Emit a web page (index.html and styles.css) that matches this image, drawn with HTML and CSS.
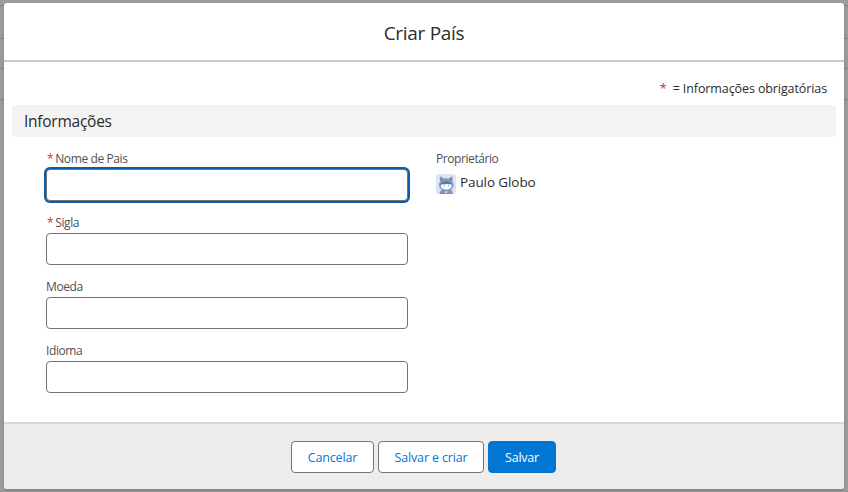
FILE: index.html
```html
<!DOCTYPE html>
<html lang="pt-BR">
<head>
<meta charset="utf-8">
<title>Criar País</title>
<link rel="stylesheet" href="styles.css">
</head>
<body>
<main class="modal">
  <header class="modal-header"><h1>Criar País</h1></header>
  <div class="modal-body">
    <p class="legend"><span class="required">*</span><span>= Informações obrigatórias</span></p>
    <h2 class="section-title"><span>Informações</span></h2>
    <div class="form-grid">
      <div class="fields">
        <div class="field"><label for="name"><abbr>*</abbr><span>Nome de Pais</span></label><input id="name" class="input focused" type="text"></div>
        <div class="field"><label for="code"><abbr>*</abbr><span>Sigla</span></label><input id="code" class="input" type="text"></div>
        <div class="field"><label for="currency"><span>Moeda</span></label><input id="currency" class="input" type="text"></div>
        <div class="field"><label for="language"><span>Idioma</span></label><input id="language" class="input" type="text"></div>
      </div>
      <div class="owner">
        <div class="owner-label">Proprietário</div>
        <div class="owner-value">
          <svg class="avatar" viewBox="0 0 20 20" aria-hidden="true">
            <rect width="20" height="20" rx="3" fill="#dfe5ee"/>
            <path d="M3.5 20q.2-3.7 3.5-4.5h6.5q3.3.8 3.5 4.5z" fill="#7f97be"/>
            <path d="M4 2.5Q5.8 2.6 7.3 4.6Q10.2 3.9 13.1 4.6Q14.7 2.6 16.5 2.5Q17 5 16.2 7.3Q17.9 9.3 17.6 11.8Q16.5 16.8 10.2 16.8Q4 16.8 3 11.8Q2.6 9.3 4.3 7.3Q3.5 5 4 2.5z" fill="#7e98c0"/>
            <path d="M4.9 4.1l1.5 1.4-1 1.1zM15.5 4.1L14 5.5l1.1 1.1z" fill="#526e9e"/>
            <ellipse cx="10.3" cy="11.9" rx="5.4" ry="3.8" fill="#fff"/>
            <path d="M4.7 11Q5.2 7.5 10.2 7.5Q15.3 7.5 15.9 11L14 9.9l-1.5.6-2.2-.8-1.8 1-1.6-.6z" fill="#5874a4"/>
            <path d="M8 11.5v1.2M12.8 11.5v1.2" fill="none" stroke="#7c8eab" stroke-width=".9"/>
            <path d="M8.7 17.5h3l-1.5 2z" fill="#e9eef7"/>
          </svg>
          <span>Paulo Globo</span>
        </div>
      </div>
    </div>
  </div>
  <footer class="modal-footer">
    <button class="button cancel" type="button"><span>Cancelar</span></button>
    <button class="button save-new" type="button"><span>Salvar e criar</span></button>
    <button class="button save" type="button"><span>Salvar</span></button>
  </footer>
</main>
</body>
</html>
```
FILE: styles.css
```css
* { box-sizing: border-box; }
body {
  margin: 0;
  height: 492px;
  padding: 3px 4px;
  overflow: hidden;
  font-family: "Open Sans", "Noto Sans", sans-serif;
  font-size: 13px;
  color: #2b2b2b;
  background:
    linear-gradient(#858585, #858585) 0 5px / 100% 1px no-repeat,
    linear-gradient(#858585, #858585) 0 38px / 100% 1px no-repeat,
    linear-gradient(#858585, #858585) 0 68px / 100% 1px no-repeat,
    linear-gradient(#858585, #858585) 0 99px / 100% 1px no-repeat,
    #9c9b9a;
}
.modal {
  height: 486px;
  display: flex;
  flex-direction: column;
  border-radius: 3px;
  background: #fff;
  overflow: hidden;
  box-shadow: 0 2px 3px rgba(0, 0, 0, .16);
}
h1, h2, p { margin: 0; font-weight: 400; }
.modal-header {
  height: 59px;
  display: flex;
  justify-content: center;
  padding-top: 17px;
  border-bottom: 2px solid #c9c9c9;
}
h1 { font-size: 19px; line-height: 27px; letter-spacing: -.3px; white-space: nowrap; }
.modal-body { flex: 1; padding: 0 8px; }
.legend {
  height: 43px;
  padding: 17px 9px 0 0;
  display: flex;
  justify-content: flex-end;
  gap: 6px;
  font-size: 12.5px;
  line-height: 19px;
  letter-spacing: -.1px;
}
.required, abbr { color: #c23934; }
.section-title {
  height: 32px;
  padding-left: 12px;
  border-radius: 4px;
  background: #f3f3f3;
  font-size: 15.5px;
  line-height: 32px;
  letter-spacing: -.25px;
}
.form-grid {
  display: grid;
  grid-template-columns: 362px 1fr;
  column-gap: 28px;
  padding: 12px 0 0 34px;
}
.fields { display: grid; gap: 12px; }
.field { height: 52px; }
label {
  height: 20px;
  display: flex;
  gap: 2px;
  font-size: 12px;
  line-height: 19px;
  letter-spacing: -.4px;
  color: #505050;
}
abbr { padding-left: 1px; }
.input {
  display: block;
  width: 362px;
  height: 32px;
  padding: 0 12px;
  border: 1px solid #747474;
  border-radius: 4px;
  background: #fff;
  font: inherit;
}
.focused { box-shadow: 0 0 0 2px #0b5cab; outline: none; }
.owner-label { font-size: 12px; line-height: 19px; letter-spacing: -.42px; color: #505050; }
.owner-value {
  display: flex;
  gap: 4px;
  padding-top: 4px;
  font-size: 13.5px;
  line-height: 20px;
  letter-spacing: -.1px;
}
.avatar { width: 20px; height: 20px; margin-top: 2px; }
.modal-footer {
  height: 67px;
  display: flex;
  justify-content: center;
  gap: 4px;
  padding: 17px 1px 0 0;
  border-top: 2px solid #d8d8d8;
  background: #eeedeb;
}
.button {
  height: 32px;
  padding: 0;
  border: 1px solid #747474;
  border-radius: 4px;
  background: #fff;
  color: #0176d3;
  font: inherit;
  font-size: 12.5px;
  letter-spacing: -.15px;
  white-space: nowrap;
}
.cancel { width: 83px; }
.save-new { width: 106px; }
.save { width: 68px; border-color: #0176d3; background: #0176d3; color: #fff; font-weight: 500; letter-spacing: -.25px; }
```
